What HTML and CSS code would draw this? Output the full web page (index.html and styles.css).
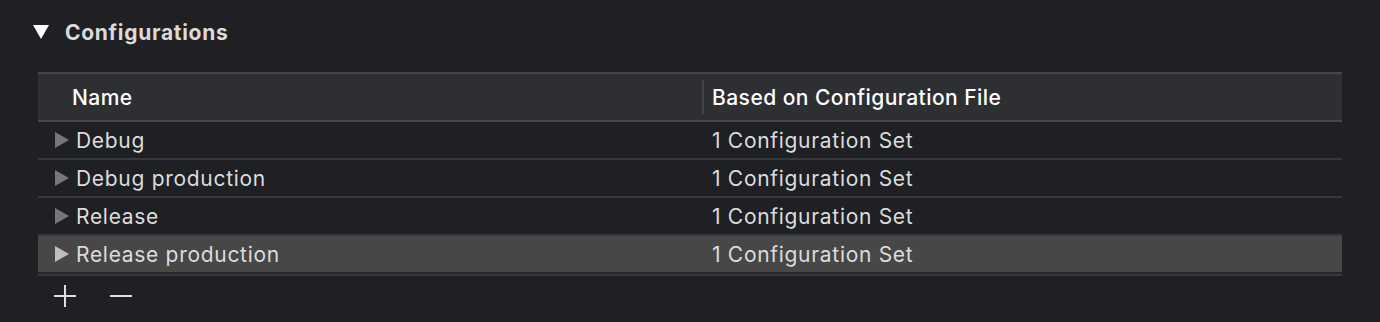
FILE: index.html
```html
<!DOCTYPE html>
<html lang="en">

<head>
    <meta charset="UTF-8">
    <title>Configurations</title>
    <link rel="stylesheet" href="styles.css">
</head>

<body>
<div class="section">
    <div class="section-title">
        <svg class="caret-down" width="16" height="14" viewBox="0 0 16 14"><path d="M0 0H16L8 14Z" fill="#fff"/></svg>
        <h2>Configurations</h2>
    </div>

    <div class="table">
        <div class="head">
            <div class="cell name">Name</div>
            <div class="cell based">Based on Configuration File</div>
        </div>
        <div class="row">
            <div class="cell name"><span class="caret"></span>Debug</div>
            <div class="cell based">1 Configuration Set</div>
        </div>
        <div class="row">
            <div class="cell name"><span class="caret"></span>Debug production</div>
            <div class="cell based">1 Configuration Set</div>
        </div>
        <div class="row">
            <div class="cell name"><span class="caret"></span>Release</div>
            <div class="cell based">1 Configuration Set</div>
        </div>
        <div class="row selected">
            <div class="cell name"><span class="caret"></span>Release production</div>
            <div class="cell based">1 Configuration Set</div>
        </div>
    </div>

    <div class="actions">
        <span class="btn plus"></span>
        <span class="btn minus"></span>
    </div>
</div>
</body>

</html>
```

FILE: styles.css
```css
* {
    margin: 0;
    padding: 0;
    box-sizing: border-box;
}

body {
    background: #1f2023;
    font-family: Inter, "Liberation Sans", sans-serif;
    color: #dcdcdd;
    width: 1380px;
    height: 322px;
    overflow: hidden;
}

.section {
    padding: 0 38px;
}

.section-title {
    display: flex;
    align-items: center;
    height: 64px;
    margin-left: -5px;
    margin-bottom: 8px;
}

.section-title svg {
    margin-right: 16px;
}

.section-title h2 {
    font-size: 21px;
    font-weight: 700;
    letter-spacing: 0.7px;
    color: #dadadb;
}

.table {
    width: 1304px;
    border-top: 2px solid #45464a;
    border-bottom: 2px solid #38393c;
}

.head,
.row {
    display: grid;
    grid-template-columns: 664px 1fr;
}

.head {
    height: 48px;
    background: #2e2f33;
    border-bottom: 2px solid #46474b;
    align-items: center;
    font-size: 21px;
    font-weight: 500;
    letter-spacing: 0.45px;
    color: #fff;
}

.head .name {
    padding-left: 34px;
}

.head .based {
    border-left: 2px solid #45464a;
    height: 34px;
    display: flex;
    align-items: center;
    padding-left: 8px;
}

.row {
    height: 38px;
    border-bottom: 2px solid #38393c;
    align-items: center;
    font-size: 21px;
    letter-spacing: 0.7px;
}

.row:last-child {
    border-bottom: 2px solid #26272a;
}

.row .name {
    display: flex;
    align-items: center;
    padding-left: 17px;
}

.row .based {
    padding-left: 10px;
}

.caret {
    width: 0;
    height: 0;
    border-top: 8.5px solid transparent;
    border-bottom: 8.5px solid transparent;
    border-left: 14px solid #777;
    margin-right: 7px;
}

.selected {
    background: #474747;
}

.selected .caret {
    border-left-color: #bdbdbd;
}

.actions {
    display: flex;
    align-items: center;
    height: 40px;
    padding-left: 16px;
    gap: 34px;
}

.btn {
    position: relative;
    width: 22px;
    height: 22px;
}

.btn::before,
.btn::after {
    content: "";
    position: absolute;
    background: #dedede;
}

.btn::before {
    left: 0;
    top: 10px;
    width: 22px;
    height: 2px;
}

.plus::after {
    left: 10px;
    top: 0;
    width: 2px;
    height: 22px;
}

.minus::after {
    display: none;
}
```
